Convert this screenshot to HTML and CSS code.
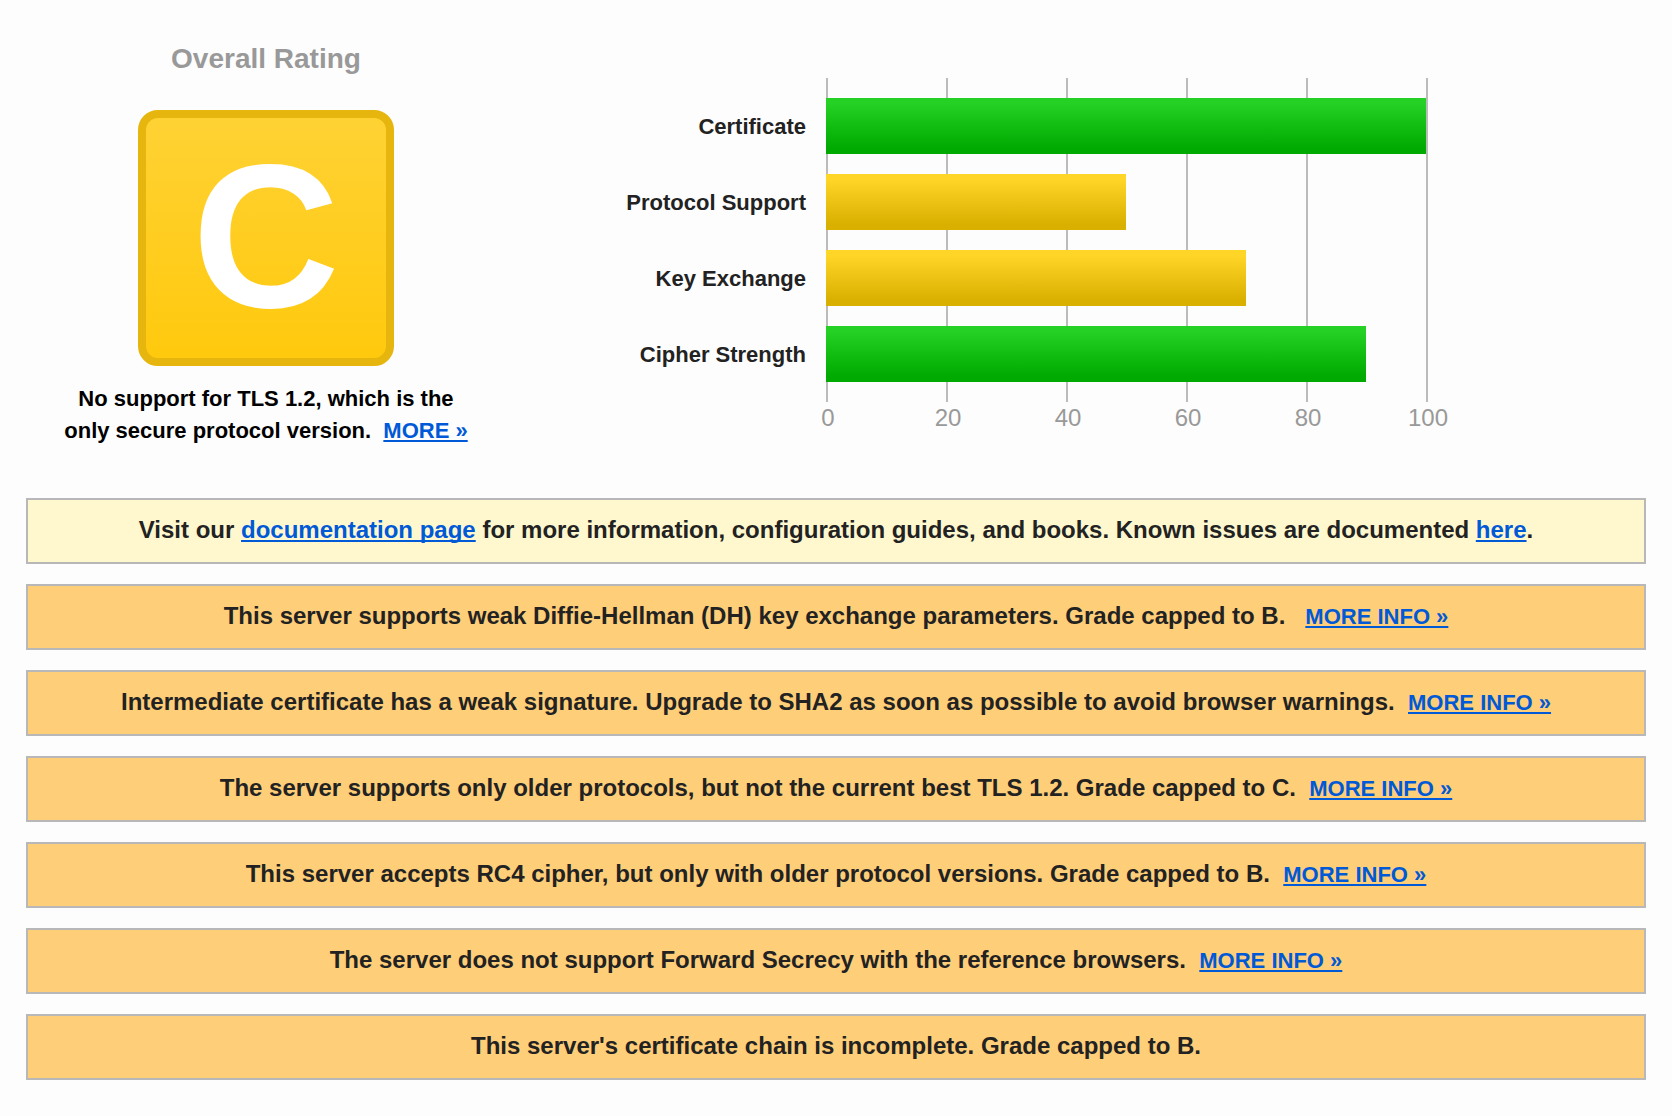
FILE: index.html
```html
<!DOCTYPE html>
<html lang="en">
<head>
  <meta charset="utf-8">
  <meta name="viewport" content="width=device-width, initial-scale=1">
  <title>SSL Server Rating</title>
  <link rel="stylesheet" href="styles.css">
</head>
<body>
  <main class="report">
    <div class="summary">
      <section class="rating">
        <h1 class="rating-title">Overall Rating</h1>
        <div class="grade">C</div>
        <p class="rating-note">No support for TLS 1.2, which is the<br>only secure protocol version. &nbsp;<a class="link" href="#tls12">MORE »</a></p>
      </section>

      <section class="chart" aria-label="Score by category">
        <div class="gridlines" aria-hidden="true">
          <span class="gridline"></span>
          <span class="gridline"></span>
          <span class="gridline"></span>
          <span class="gridline"></span>
          <span class="gridline"></span>
          <span class="gridline"></span>
        </div>
        <div class="labels">
          <div class="label">Certificate</div>
          <div class="label">Protocol Support</div>
          <div class="label">Key Exchange</div>
          <div class="label">Cipher Strength</div>
        </div>
        <div class="bars">
          <div class="bar bar-good" style="width: 100%"></div>
          <div class="bar bar-fair" style="width: 50%"></div>
          <div class="bar bar-fair" style="width: 70%"></div>
          <div class="bar bar-good" style="width: 90%"></div>
        </div>
        <div class="ticks">
          <span class="tick">0</span>
          <span class="tick">20</span>
          <span class="tick">40</span>
          <span class="tick">60</span>
          <span class="tick">80</span>
          <span class="tick">100</span>
        </div>
      </section>
    </div>

    <section class="notices" aria-label="Notices">
      <p class="notice notice-info">Visit our <a class="link" href="#documentation">documentation page</a> for more information, configuration guides, and books. Known issues are documented <a class="link" href="#issues">here</a>.</p>
      <p class="notice">This server supports weak Diffie-Hellman (DH) key exchange parameters. Grade capped to B. &nbsp;&nbsp;<a class="link link-more" href="#dh">MORE INFO »</a></p>
      <p class="notice">Intermediate certificate has a weak signature. Upgrade to SHA2 as soon as possible to avoid browser warnings. &nbsp;<a class="link link-more" href="#sha2">MORE INFO »</a></p>
      <p class="notice">The server supports only older protocols, but not the current best TLS 1.2. Grade capped to C. &nbsp;<a class="link link-more" href="#protocols">MORE INFO »</a></p>
      <p class="notice">This server accepts RC4 cipher, but only with older protocol versions. Grade capped to B. &nbsp;<a class="link link-more" href="#rc4">MORE INFO »</a></p>
      <p class="notice">The server does not support Forward Secrecy with the reference browsers. &nbsp;<a class="link link-more" href="#forward-secrecy">MORE INFO »</a></p>
      <p class="notice">This server's certificate chain is incomplete. Grade capped to B.</p>
    </section>
  </main>
</body>
</html>
```
FILE: styles.css
```css
* {
  box-sizing: border-box;
}

body {
  margin: 0;
  background: #fdfdfd;
  color: #222;
  font-family: "Liberation Sans", Arial, Helvetica, sans-serif;
  font-weight: bold;
}

.report {
  display: flex;
  flex-direction: column;
  gap: 51px;
  padding: 43px 26px 36px;
}

.summary {
  display: grid;
  grid-template-columns: 480px minmax(0, 920px);
  align-items: start;
}

/* Grade column */

.rating {
  display: flex;
  flex-direction: column;
  align-items: center;
}

.rating-title {
  margin: 0 0 35px;
  color: #999;
  font-size: 28px;
  line-height: 32px;
}

.grade {
  display: flex;
  align-items: flex-start;
  justify-content: center;
  width: 256px;
  height: 256px;
  border: 8px solid #e6b60f;
  border-radius: 20px;
  background: linear-gradient(#ffd234, #ffc90d);
  color: #fff;
  font-size: 204px;
  line-height: 236px;
}

.rating-note {
  margin: 17px 0 0;
  color: #000;
  font-size: 22px;
  line-height: 32px;
  text-align: center;
}

/* Bar chart */

.chart {
  display: grid;
  grid-template-columns: 300px minmax(0, 1fr);
  column-gap: 20px;
  row-gap: 2px;
  margin-top: 35px;
}

.gridlines {
  display: flex;
  grid-row: 1;
  grid-column: 2;
  justify-content: space-between;
  margin-right: -2px;
}

.gridline {
  width: 2px;
  background: #bbb;
}

.labels,
.bars {
  display: flex;
  flex-direction: column;
  grid-row: 1;
  gap: 20px;
}

.labels {
  grid-column: 1;
  padding: 21px 0 19px;
}

.bars {
  grid-column: 2;
  padding: 20px 0;
}

.label {
  font-size: 22px;
  line-height: 56px;
  text-align: right;
}

.bar {
  height: 56px;
}

.bar-good {
  background: linear-gradient(#25d125 10%, #00aa00 90%);
}

.bar-fair {
  background: linear-gradient(#ffd527 10%, #d9af00 90%);
}

.ticks {
  display: flex;
  grid-row: 2;
  grid-column: 2;
  justify-content: space-between;
  margin-right: -4px;
  color: #999;
  font-size: 24px;
  font-weight: normal;
  line-height: 28px;
}

.tick {
  display: flex;
  justify-content: center;
  width: 4px;
}

/* Notices */

.notices {
  display: flex;
  flex-direction: column;
  gap: 20px;
}

.notice {
  margin: 0;
  padding: 15px 16px 17px;
  border: 2px solid #b8b8b8;
  background: #ffce78;
  font-size: 24px;
  line-height: 30px;
  text-align: center;
}

.notice-info {
  background: #fff8ce;
}

.link {
  color: #0059d6;
  text-decoration: underline;
  text-decoration-skip-ink: none;
  text-decoration-thickness: 2px;
  text-underline-offset: 2px;
}

.link-more {
  font-size: 22px;
  line-height: 24px;
}
```
